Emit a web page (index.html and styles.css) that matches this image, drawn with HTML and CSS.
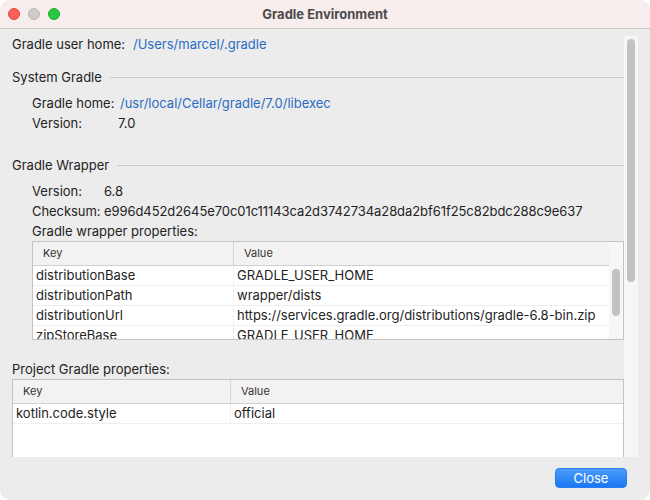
FILE: index.html
```html
<!DOCTYPE html>
<html>
<head>
<meta charset="utf-8">
<link rel="stylesheet" href="styles.css">
</head>
<body>
<div class="window">
  <div class="titlebar">
    <div class="lights">
      <span class="light red"></span>
      <span class="light gray"></span>
      <span class="light green"></span>
    </div>
    <div class="title">Gradle Environment</div>
    <div></div>
  </div>
  <div class="main">
    <div class="viewport">
      <div class="content">
        <div class="row first">
          <span class="lbl w-top">Gradle user home:</span><span class="link">/Users/marcel/.gradle</span>
        </div>

        <div class="section-head sys">
          <span class="sh-text">System Gradle</span><span class="rule"></span>
        </div>
        <div class="indent sys-body">
          <div class="row"><span class="lbl w-sys">Gradle home:</span><span class="link">/usr/local/Cellar/gradle/7.0/libexec</span></div>
          <div class="row"><span class="lbl w-sys">Version:</span><span class="val">7.0</span></div>
        </div>

        <div class="section-head wrap">
          <span class="sh-text">Gradle Wrapper</span><span class="rule"></span>
        </div>
        <div class="indent wrap-body">
          <div class="row"><span class="lbl w-wrap">Version:</span><span class="val">6.8</span></div>
          <div class="row"><span class="val checksum">Checksum: e996d452d2645e70c01c11143ca2d3742734a28da2bf61f25c82bdc288c9e637</span></div>
          <div class="row"><span class="val">Gradle wrapper properties:</span></div>

          <div class="table t1">
            <div class="tmain">
              <div class="thead">
                <div class="th key">Key</div>
                <div class="th">Value</div>
              </div>
              <div class="tbody short">
                <div class="tr"><div class="td key">distributionBase</div><div class="td">GRADLE_USER_HOME</div></div>
                <div class="tr"><div class="td key">distributionPath</div><div class="td">wrapper/dists</div></div>
                <div class="tr"><div class="td key">distributionUrl</div><div class="td">https://services.gradle.org/distributions/gradle-6.8-bin.zip</div></div>
                <div class="tr"><div class="td key">zipStoreBase</div><div class="td">GRADLE_USER_HOME</div></div>
              </div>
            </div>
            <div class="tscroll"><div class="tthumb"></div></div>
          </div>
        </div>

        <div class="row proj">
          <span class="val">Project Gradle properties:</span>
        </div>
        <div class="table t2">
          <div class="tmain">
            <div class="thead">
              <div class="th key">Key</div>
              <div class="th">Value</div>
            </div>
            <div class="tbody tall">
              <div class="tr"><div class="td key">kotlin.code.style</div><div class="td">official</div></div>
            </div>
          </div>
        </div>
      </div>
    </div>
    <div class="vscroll"><div class="vthumb"></div></div>
  </div>
  <div class="footer">
    <button class="btn">Close</button>
  </div>
</div>
</body>
</html>
```

FILE: styles.css
```css
* { box-sizing: border-box; }

html, body {
  margin: 0;
  padding: 0;
  background: #ffffff;
}

body {
  font-family: Inter, "Liberation Sans", sans-serif;
  font-size: 13px;
  color: #232323;
}

.window {
  width: 650px;
  height: 500px;
  border-radius: 10px;
  overflow: hidden;
  background: #ececec;
  display: flex;
  flex-direction: column;
}

.titlebar {
  height: 29px;
  flex: none;
  background: #f7eded;
  border-bottom: 1px solid #cbc5c5;
  display: grid;
  grid-template-columns: 1fr auto 1fr;
  align-items: center;
}

.lights {
  display: flex;
  gap: 8px;
  padding-left: 8px;
}

.light {
  width: 12px;
  height: 12px;
  border-radius: 50%;
  display: block;
}
.light.red { background: #fe5f57; border: 0.5px solid #e2463f; }
.light.gray { background: #d0cbcb; border: 0.5px solid #bdb7b7; }
.light.green { background: #28c840; border: 0.5px solid #1aab29; }

.title {
  font-weight: 700;
  font-size: 13px;
  color: #4b4b4b;
}

.main {
  height: 428px;
  flex: none;
  display: flex;
}

.viewport {
  width: 624px;
  height: 428px;
  overflow: hidden;
  flex: none;
}

.content {
  padding: 5px 0 0 12px;
}

.row {
  height: 20px;
  line-height: 20px;
  display: flex;
  white-space: nowrap;
}

.lbl { display: inline-block; flex: none; }
.w-top { width: 119px; }
.w-sys { width: 86px; }
.w-wrap { width: 72px; }

.link { color: #2b6dc2; padding-left: 2px; }
.val { color: #232323; }
.checksum { letter-spacing: -0.07px; }

.section-head {
  height: 20px;
  line-height: 20px;
  display: flex;
  align-items: center;
}
.section-head.sys { margin-top: 13px; }
.section-head.wrap { margin-top: 22px; }

.sh-text { flex: none; }
.rule {
  flex: 1;
  height: 1px;
  background: #cbcbcb;
  margin-left: 8px;
}

.indent { padding-left: 20px; }
.sys-body { margin-top: 6px; }
.wrap-body { margin-top: 6px; }

.proj { margin-top: 19px; }

.table {
  border: 1px solid #c3c3c3;
  background: #ffffff;
  display: flex;
}

.tmain { flex: 1; min-width: 0; }

.thead {
  display: flex;
  height: 24px;
  background: #f2f2f2;
  border-bottom: 1px solid #d0d0d0;
  align-items: stretch;
}

.th {
  font-size: 11px;
  color: #333333;
  line-height: 23px;
  padding-left: 10px;
  flex: 1;
}
.th.key { flex: none; border-right: 1px solid #d6d6d6; }

.tbody { overflow: hidden; }
.tbody.short { height: 73px; }
.tbody.tall { height: 120px; }

.tr {
  display: flex;
  height: 20px;
  border-bottom: 1px solid #efefef;
  white-space: nowrap;
}

.td {
  line-height: 19px;
  padding-left: 3px;
  flex: 1;
  overflow: hidden;
}
.td.key { flex: none; border-right: 1px solid #f0f0f0; }

.t1 .key { width: 201px; }
.t2 .key { width: 218px; }

.tscroll {
  width: 14px;
  flex: none;
  background: #f6f6f6;
  padding: 27px 0 0 3px;
}
.tthumb {
  width: 8px;
  height: 47px;
  border-radius: 4px;
  background: #c2c2c2;
}

.vscroll {
  width: 14px;
  margin-top: 7px;
  background: #f6f6f6;
  padding: 3px 0 0 3px;
  flex: none;
}
.vthumb {
  width: 8px;
  height: 243px;
  border-radius: 4px;
  background: #c2c2c2;
}

.footer {
  flex: 1;
  display: flex;
  justify-content: flex-end;
  align-items: flex-start;
  padding: 11px 23px 0 0;
}

.btn {
  width: 72px;
  height: 20px;
  border-radius: 4px;
  border: 1px solid #2b7cf0;
  background: linear-gradient(#4b9cfa, #1b76f1);
  color: #ffffff;
  font-family: Inter, "Liberation Sans", sans-serif;
  font-size: 13px;
  line-height: 18px;
  padding: 0;
}
```
